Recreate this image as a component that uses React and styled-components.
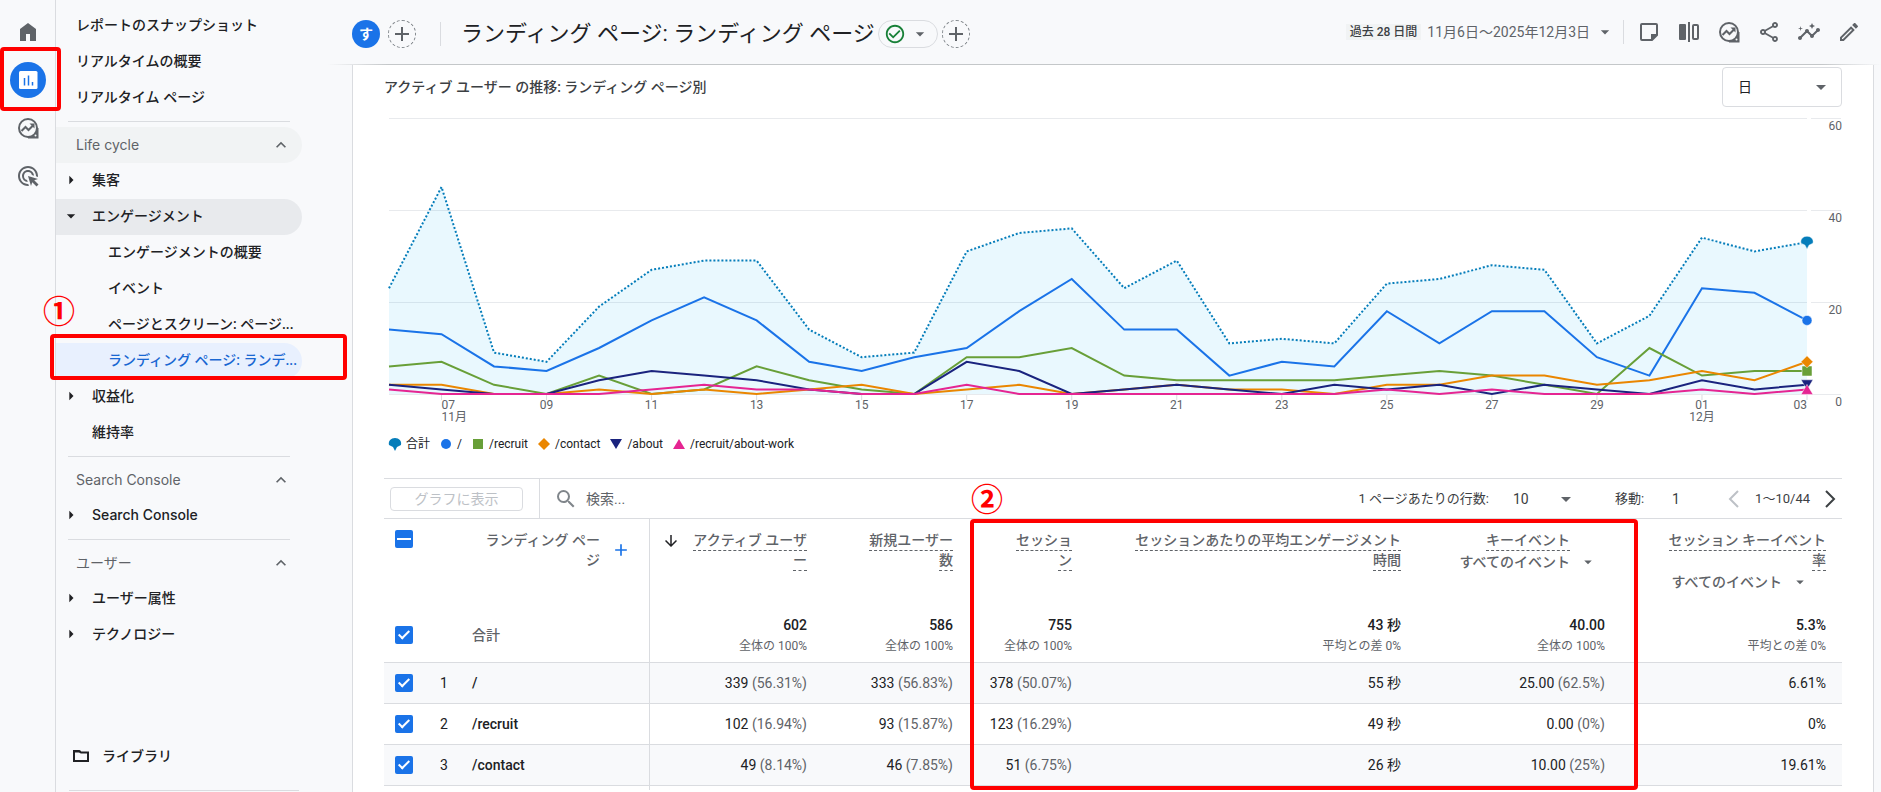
import styled, { createGlobalStyle, css } from "styled-components";

// Import Icons
import {
  MdAdd,
  MdAdsClick,
  MdArrowDownward,
  MdArrowDropDown,
  MdArrowRight,
  MdCheckCircleOutline,
  MdExpandLess,
  MdInsights,
  MdOutlineEdit,
  MdOutlineShare,
  MdSearch,
} from "react-icons/md";

const DAYS = 28;

const series = [
  {
    name: "合計",
    color: "#057dba",
    shape: "fan",
    values: [23, 45, 9, 7, 19, 27, 29, 29, 14, 8, 9, 31, 35, 36, 23, 29, 11, 12, 11, 24, 25, 28, 27, 11, 17, 34, 31, 33],
  },
  {
    name: "/",
    color: "#1a73e8",
    shape: "circle",
    values: [14, 13, 6, 5, 10, 16, 21, 16, 7, 5, 8, 10, 18, 25, 14, 14, 4, 7, 6, 18, 11, 18, 18, 8, 4, 23, 22, 16],
  },
  {
    name: "/recruit",
    color: "#689f38",
    shape: "square",
    values: [6, 7, 2, 0, 4, 0, 1, 6, 3, 1, 0, 8, 8, 10, 4, 3, 3, 3, 3, 4, 5, 4, 2, 0, 10, 4, 5, 5],
  },
  {
    name: "/contact",
    color: "#ea8600",
    shape: "diamond",
    values: [2, 2, 0, 0, 1, 0, 1, 0, 1, 2, 0, 1, 2, 0, 1, 2, 1, 1, 0, 2, 2, 4, 4, 2, 3, 5, 3, 7],
  },
  {
    name: "/about",
    color: "#1a237e",
    shape: "down",
    values: [2, 1, 0, 0, 3, 5, 4, 3, 1, 0, 0, 7, 5, 0, 1, 2, 1, 0, 2, 1, 2, 0, 2, 1, 0, 3, 1, 2],
  },
  {
    name: "/recruit/about-work",
    color: "#e52592",
    shape: "up",
    values: [1, 0, 0, 0, 0, 1, 2, 1, 1, 0, 0, 2, 0, 0, 0, 0, 0, 0, 0, 1, 0, 1, 0, 0, 0, 1, 0, 1],
  },
];

const shapes = {
  fan: "M-6 1C-7 -3 -4 -6 0 -6S7 -3 6 1L2 3 0 7 -2 3Z",
  circle: "M-5 0a5 5 0 1 0 10 0a5 5 0 1 0 -10 0Z",
  square: "M-5 -5H5V5H-5Z",
  diamond: "M0 -6L6 0 0 6 -6 0Z",
  down: "M-6 -5H6L0 5Z",
  up: "M-6 5H6L0 -5Z",
};

const columns = [
  { lines: ["アクティブ ユーザ", "ー"], sorted: true, total: "602", note: "全体の 100%" },
  { lines: ["新規ユーザー", "数"], total: "586", note: "全体の 100%" },
  { lines: ["セッショ", "ン"], total: "755", note: "全体の 100%" },
  { lines: ["セッションあたりの平均エンゲージメント", "時間"], total: "43 秒", note: "平均との差 0%" },
  { lines: ["キーイベント"], filter: true, indent: true, total: "40.00", note: "全体の 100%" },
  { lines: ["セッション キーイベント", "率"], filter: true, total: "5.3%", note: "平均との差 0%" },
];

const rows = [
  {
    path: "/",
    cells: [["339", "(56.31%)"], ["333", "(56.83%)"], ["378", "(50.07%)"], ["55 秒"], ["25.00", "(62.5%)"], ["6.61%"]],
  },
  {
    path: "/recruit",
    cells: [["102", "(16.94%)"], ["93", "(15.87%)"], ["123", "(16.29%)"], ["49 秒"], ["0.00", "(0%)"], ["0%"]],
  },
  {
    path: "/contact",
    cells: [["49", "(8.14%)"], ["46", "(7.85%)"], ["51", "(6.75%)"], ["26 秒"], ["10.00", "(25%)"], ["19.61%"]],
  },
];

const ExploreIcon = () => (
  <svg width="24" height="24" viewBox="0 0 24 24" fill="none" stroke="currentColor" strokeWidth="2">
    <circle cx="12" cy="12" r="9" />
    <path d="M21 12v9h-9c4 0 9-4 9-9z" fill="currentColor" stroke="none" />
    <path d="M21.500 12v9.500H12" />
    <path d="M5.500 15l4-4 3 3 4.500-4.500" />
    <path d="M13.500 7.500h5v5z" fill="currentColor" stroke="none" />
    <circle cx="19.500" cy="19.500" r="1" fill="#f8f9fb" stroke="none" />
  </svg>
);

const HomeIcon = () => (
  <svg width="24" height="24" viewBox="0 0 24 24" fill="currentColor">
    <path d="M4 21V9l8-6 8 6v12h-6v-7h-4v7z" />
  </svg>
);

const ReportsIcon = () => (
  <svg width="24" height="24" viewBox="0 0 24 24">
    <rect x="3" y="3" width="18.500" height="18" rx="1.500" fill="#fff" />
    <path d="M8.500 10v7.500M12.500 7.500v10M16.500 14v3.500" stroke="#1a73e8" strokeWidth="1.500" />
  </svg>
);

const NoteIcon = () => (
  <svg width="24" height="24" viewBox="0 0 24 24" fill="none" stroke="currentColor" strokeWidth="2">
    <path d="M5 4h14a1 1 0 0 1 1 1v10l-5 5H5a1 1 0 0 1-1-1V5a1 1 0 0 1 1-1z" />
    <path d="M14 21v-7h7z" fill="currentColor" stroke="none" />
  </svg>
);

const CompareIcon = () => (
  <svg width="24" height="24" viewBox="0 0 24 24" fill="none" stroke="currentColor" strokeWidth="2">
    <rect x="2" y="4" width="7" height="16" rx="1" fill="currentColor" stroke="none" />
    <path d="M12 2v20" />
    <rect x="16" y="5" width="5" height="14" rx="1" />
  </svg>
);

const FolderIcon = () => (
  <svg width="20" height="20" viewBox="0 0 20 20" fill="none" stroke="currentColor" strokeWidth="2">
    <path d="M3 5h5l2 1.500h7V15H3z" />
    <path d="M2.500 5.500h7" />
  </svg>
);

const PageArrow = ({ d }) => (
  <svg width="24" height="24" viewBox="0 0 24 24" fill="none" stroke="currentColor" strokeWidth="2">
    <path d={d} />
  </svg>
);

const Marker = ({ shape, color, ...rest }) => <path d={shapes[shape]} fill={color} {...rest} />;

// Plot geometry, in the units of the viewBox
const PLOT = { left: 5, right: 1423, base: 287, perUnit: 4.6 };
const xAt = (day) => PLOT.left + ((PLOT.right - PLOT.left) * day) / (DAYS - 1);
const yAt = (value) => PLOT.base - value * PLOT.perUnit;
const toPoints = (values) => values.map((v, i) => `${xAt(i)},${yAt(v)}`).join(" ");

const dayLabels = ["07", "09", "11", "13", "15", "17", "19", "21", "23", "25", "27", "29", "01", "03"];

const TrendChart = () => {
  const total = series[0];
  const area = `${PLOT.left},${PLOT.base} ${toPoints(total.values)} ${PLOT.right},${PLOT.base}`;
  return (
    <ChartSvg viewBox="0 0 1458 322" role="img" aria-label="アクティブ ユーザー の推移">
      {[0, 20, 40, 60].map((v) => (
        <g key={v}>
          <path d={`M${PLOT.left} ${yAt(v) + 0.5}H${PLOT.right}M1427 ${yAt(v) + 0.5}H1457`} stroke="#e8eaed" />
          <text x="1458" y={yAt(v) + 12} textAnchor="end">
            {v}
          </text>
        </g>
      ))}
      <polygon points={area} fill="#03a9f4" fillOpacity="0.085" />
      {dayLabels.map((label, i) => {
        const x = xAt(1 + i * 2);
        const anchor = i === 0 ? "start" : i === 13 ? "end" : "middle";
        return (
          <g key={label}>
            <path d={`M${x} 288v5`} stroke="#dadce0" />
            <text x={x} y="302" textAnchor={anchor}>
              {label}
            </text>
            {(label === "07" || label === "01") && (
              <text x={x} y="314" textAnchor={anchor}>
                {label === "07" ? "11月" : "12月"}
              </text>
            )}
          </g>
        );
      })}
      {series.map((s) => (
        <polyline
          key={s.name}
          points={toPoints(s.values)}
          fill="none"
          stroke={s.color}
          strokeWidth="2"
          strokeDasharray={s === total ? "2 2" : undefined}
        />
      ))}
      {series.map((s) => (
        <Marker
          key={s.name}
          shape={s.shape}
          color={s.color}
          stroke="#fff"
          strokeWidth="0.5"
          transform={`translate(${PLOT.right} ${yAt(s.values[DAYS - 1])})`}
        />
      ))}
    </ChartSvg>
  );
};

const Sidebar = () => (
  <Nav aria-label="レポート">
    <NavItem href="#snapshot">レポートのスナップショット</NavItem>
    <NavItem href="#realtime">リアルタイムの概要</NavItem>
    <NavItem href="#realtime-pages">リアルタイム ページ</NavItem>
    <NavLine />
    <NavHeading $hover>
      Life cycle <MdExpandLess size={20} />
    </NavHeading>
    <NavItem href="#acquisition" $level={1}>
      <MdArrowRight size={20} />
      集客
    </NavItem>
    <NavItem href="#engagement" $level={1} $open>
      <MdArrowDropDown size={20} />
      エンゲージメント
    </NavItem>
    <NavItem href="#overview" $level={2}>エンゲージメントの概要</NavItem>
    <NavItem href="#events" $level={2}>イベント</NavItem>
    <NavItem href="#pages" $level={2}>ページとスクリーン: ページ...</NavItem>
    <Anchor>
      <NavItem href="#landing" $level={2} $active>ランディング ページ: ランデ...</NavItem>
      <NavMark />
      <NavNumber>①</NavNumber>
    </Anchor>
    <NavItem href="#monetization" $level={1}>
      <MdArrowRight size={20} />
      収益化
    </NavItem>
    <NavItem href="#retention" $level={1}>維持率</NavItem>
    <NavLine />
    <NavHeading>
      Search Console <MdExpandLess size={20} />
    </NavHeading>
    <NavItem href="#search-console" $level={1}>
      <MdArrowRight size={20} />
      Search Console
    </NavItem>
    <NavLine />
    <NavHeading>
      ユーザー <MdExpandLess size={20} />
    </NavHeading>
    <NavItem href="#attributes" $level={1}>
      <MdArrowRight size={20} />
      ユーザー属性
    </NavItem>
    <NavItem href="#tech" $level={1}>
      <MdArrowRight size={20} />
      テクノロジー
    </NavItem>
    <Library href="#library">
      <FolderIcon />
      ライブラリ
    </Library>
    <LibraryLine />
  </Nav>
);

const Header = () => (
  <TopBar>
    <TitleGroup>
      <Avatar>す</Avatar>
      <RoundButton aria-label="比較を追加">
        <MdAdd size={24} />
      </RoundButton>
      <TitleDivider />
      <h1>ランディング ページ: ランディング ページ</h1>
      <StatusPill aria-label="ステータス">
        <MdCheckCircleOutline size={22} color="#188038" />
        <MdArrowDropDown size={20} />
      </StatusPill>
      <RoundButton aria-label="フィルタを追加">
        <MdAdd size={24} />
      </RoundButton>
    </TitleGroup>
    <Tools>
      <DateButton>
        <span>過去 28 日間</span>
        11月6日～2025年12月3日
        <MdArrowDropDown size={20} />
      </DateButton>
      <Divider />
      <ToolButton aria-label="メモ"><NoteIcon /></ToolButton>
      <ToolButton aria-label="比較"><CompareIcon /></ToolButton>
      <ToolButton aria-label="探索"><ExploreIcon /></ToolButton>
      <ToolButton aria-label="共有"><MdOutlineShare size={24} /></ToolButton>
      <ToolButton aria-label="インサイト"><MdInsights size={24} /></ToolButton>
      <ToolButton aria-label="編集"><MdOutlineEdit size={24} /></ToolButton>
    </Tools>
  </TopBar>
);

const TableToolbar = () => (
  <Toolbar>
    <PlotButton disabled>グラフに表示</PlotButton>
    <SearchBox>
      <MdSearch size={24} />
      <input type="text" placeholder="検索..." aria-label="検索" />
    </SearchBox>
    <Pager>
      <label htmlFor="page-size">1 ページあたりの行数:</label>
      <SizeSelect>
        <select id="page-size" defaultValue="10">
          <option>10</option>
          <option>25</option>
        </select>
        <MdArrowDropDown size={24} />
      </SizeSelect>
      <label htmlFor="go-to">移動:</label>
      <input id="go-to" type="text" defaultValue="1" />
      <button aria-label="前へ" disabled><PageArrow d="M16 4l-8 8 8 8" /></button>
      <span>1～10/44</span>
      <button aria-label="次へ"><PageArrow d="M8 4l8 8-8 8" /></button>
    </Pager>
  </Toolbar>
);

const DataTable = () => (
  <TableWrap>
    <Table>
      <colgroup>
        <col width="46" />
        <col width="30" />
        <col />
        <col width="173" />
        <col width="146" />
        <col width="119" />
        <col width="329" />
        <col width="204" />
        <col width="221" />
      </colgroup>
      <thead>
        <tr>
          <CheckHead>
            <CheckBox type="checkbox" aria-label="すべて選択" $mixed defaultChecked />
          </CheckHead>
          <DimensionHead colSpan="2">
            <div>
              <span>
                ランディング ペー
                <br />ジ
              </span>
              <button aria-label="ディメンションを追加">
                <MdAdd size={20} />
              </button>
            </div>
          </DimensionHead>
          {columns.map((col) => (
            <MetricHead key={col.lines[0]} $indent={col.indent}>
              <div>
                {col.sorted && <MdArrowDownward size={18} />}
                <p>
                  <span>
                    {col.lines[0]}
                    {col.lines[1] && <br />}
                    {col.lines[1]}
                  </span>
                </p>
              </div>
              {col.filter && (
                <EventFilter $indent={col.indent}>
                  すべてのイベント
                  <MdArrowDropDown size={18} />
                </EventFilter>
              )}
            </MetricHead>
          ))}
        </tr>
      </thead>
      <tbody>
        <TotalRow>
          <td>
            <CheckBox type="checkbox" aria-label="合計" defaultChecked />
          </td>
          <td />
          <NameCell>合計</NameCell>
          {columns.map((col) => (
            <MetricCell key={col.lines[0]}>
              <strong>{col.total}</strong>
              <small>{col.note}</small>
            </MetricCell>
          ))}
        </TotalRow>
        {rows.map((row, i) => (
          <DataRow key={row.path}>
            <td>
              <CheckBox type="checkbox" aria-label={row.path} defaultChecked />
            </td>
            <IndexCell>{i + 1}</IndexCell>
            <NameCell $strong>{row.path}</NameCell>
            {row.cells.map(([value, share], c) => (
              <MetricCell key={c}>
                {value} {share && <span>{share}</span>}
              </MetricCell>
            ))}
          </DataRow>
        ))}
        <tr>
          <TailCell colSpan="3" />
          <td colSpan="6" />
        </tr>
      </tbody>
    </Table>
    <TableMark />
    <TableNumber>②</TableNumber>
  </TableWrap>
);

const App = () => {
  return (
    <>
      <GlobalStyle />
      <Layout>
        <Rail>
          <RailButton aria-label="ホーム"><HomeIcon /></RailButton>
          <Anchor>
            <RailButton aria-label="レポート">
              <i><ReportsIcon /></i>
            </RailButton>
            <RailMark />
          </Anchor>
          <RailButton aria-label="探索"><ExploreIcon /></RailButton>
          <RailButton aria-label="広告"><MdAdsClick size={24} /></RailButton>
        </Rail>
        <Sidebar />
        <Main>
          <Header />
          <Panel>
            <ChartHead>
              <h2>アクティブ ユーザー の推移: ランディング ページ別</h2>
              <UnitSelect>
                <select aria-label="単位" defaultValue="日">
                  <option>日</option>
                  <option>週</option>
                  <option>月</option>
                </select>
                <MdArrowDropDown size={24} />
              </UnitSelect>
            </ChartHead>
            <TrendChart />
            <Legend>
              {series.map((s) => (
                <li key={s.name}>
                  <svg width="14" height="14" viewBox="-7 -7 14 14">
                    <Marker shape={s.shape} color={s.color} />
                  </svg>
                  {s.name}
                </li>
              ))}
            </Legend>
            <TableToolbar />
            <DataTable />
          </Panel>
        </Main>
      </Layout>
    </>
  );
};
export default App;

const GlobalStyle = createGlobalStyle`
  *, *::before, *::after {
    box-sizing: border-box;
  }

  body {
    margin: 0;
    background: #f8f9fb;
    color: #202124;
    font: 400 14px/20px Roboto, "Noto Sans CJK JP", sans-serif;
  }

  h1, h2, p, ul {
    margin: 0;
    padding: 0;
    font-weight: 400;
  }

  button, input, select {
    font: inherit;
    color: inherit;
    background: none;
    border: 0;
    padding: 0;
    margin: 0;
  }

  select {
    appearance: none;
  }

  svg {
    display: block;
    flex: none;
  }
`;

const Layout = styled.div`
  display: grid;
  grid-template-columns: 56px 296px minmax(0, 1fr);
  min-height: 100vh;
`;

/* Red call-outs drawn over the page */
const mark = css`
  position: absolute;
  border: 4px solid #f00;
  border-radius: 4px;
  pointer-events: none;
  z-index: 2;
`;

const number = css`
  position: absolute;
  color: #f00;
  font: 700 32px/32px "Noto Sans CJK JP", sans-serif;
  z-index: 2;
`;

const Anchor = styled.div`
  position: relative;
`;

const Rail = styled.aside`
  padding-top: 8px;
  border-right: 1px solid #dadce0;
`;

const RailButton = styled.button`
  display: flex;
  align-items: center;
  justify-content: center;
  width: 56px;
  height: 48px;
  color: #5f6368;

  i {
    display: flex;
    align-items: center;
    justify-content: center;
    width: 36px;
    height: 36px;
    border-radius: 50%;
    background: #1a73e8;
  }
`;

const RailMark = styled.span`
  ${mark}
  top: -9px;
  left: 0;
  width: 61px;
  height: 64px;
`;

const Nav = styled.nav`
  display: flex;
  flex-direction: column;
  padding-top: 8px;
  font-family: Inter, "Noto Sans CJK JP", sans-serif;
`;

const indents = [20, 36, 52];

const NavItem = styled.a`
  display: flex;
  align-items: center;
  width: 246px;
  height: 36px;
  padding-left: ${({ $level = 0 }) => indents[$level]}px;
  padding-bottom: 2px;
  border-radius: 0 18px 18px 0;
  color: ${({ $active }) => ($active ? "#1967d2" : "#202124")};
  background: ${({ $active, $open }) => ($active ? "#e8f0fe" : $open ? "#e8eaed" : "none")};
  font-family: ${({ $level }) => ($level === 2 ? 'Roboto, "Noto Sans CJK JP", sans-serif' : "inherit")};
  font-weight: 500;
  text-decoration: none;
  white-space: nowrap;

  svg {
    margin: 0 11px 0 -31px;
  }
`;

const NavHeading = styled.button`
  display: flex;
  align-items: center;
  justify-content: space-between;
  width: 246px;
  height: 36px;
  padding: 0 11px 0 20px;
  border-radius: 0 18px 18px 0;
  background: ${({ $hover }) => ($hover ? "#f1f3f4" : "none")};
  color: #5f6368;
`;

const NavLine = styled.hr`
  width: 222px;
  margin: 5px 0 5px 12px;
  border: 0;
  border-top: 1px solid #dadce0;
`;

const Library = styled(NavItem)`
  margin-top: auto;
  padding-left: 15px;

  svg {
    margin: 0 11px 0 0;
  }
`;

const LibraryLine = styled(NavLine)`
  width: 230px;
  margin: 15px 0 1px 13px;
`;

const NavMark = styled.span`
  ${mark}
  top: -9px;
  left: -6px;
  width: 297px;
  height: 46px;
`;

const NavNumber = styled.span`
  ${number}
  top: -50px;
  left: -13px;
`;

const Main = styled.main`
  display: flex;
  flex-direction: column;
`;

const TopBar = styled.header`
  position: relative;
  display: flex;
  justify-content: space-between;
  height: 65px;
  padding-right: 12px;

  &::after {
    content: "";
    position: absolute;
    right: 0;
    bottom: 0;
    left: -24px;
    height: 1px;
    background: linear-gradient(to right, transparent, #c4c7c9 60px, #c4c7c9 calc(100% - 60px), transparent);
  }
`;

const TitleGroup = styled.div`
  display: flex;
  align-items: center;
  height: 64px;
  padding-top: 4px;

  h1 {
    margin-right: 3px;
    font-size: 22px;
    line-height: 28px;
    white-space: nowrap;
  }
`;

const Avatar = styled.span`
  width: 28px;
  margin-right: 8px;
  border-radius: 50%;
  background: #1a73e8;
  color: #fff;
  font-weight: 700;
  line-height: 28px;
  text-align: center;
`;

const RoundButton = styled.button`
  display: flex;
  align-items: center;
  justify-content: center;
  width: 28px;
  height: 28px;
  border: 1px dashed #80868b;
  border-radius: 50%;
  color: #5f6368;
`;

const Divider = styled.span`
  width: 1px;
  height: 24px;
  margin: 0 5px 0 8px;
  background: #dadce0;
`;

const TitleDivider = styled(Divider)`
  margin: 0 20px 0 24px;
`;

const StatusPill = styled.button`
  display: flex;
  align-items: center;
  justify-content: space-between;
  width: 60px;
  height: 28px;
  margin-right: 4px;
  padding: 0 7px 0 5px;
  border: 1px solid #dadce0;
  border-radius: 14px;
  color: #5f6368;
`;

const Tools = styled.div`
  display: flex;
  align-items: center;
  height: 64px;
`;

const DateButton = styled.button`
  display: flex;
  align-items: center;
  color: #5f6368;
  white-space: nowrap;

  span {
    margin-right: 6px;
    padding: 0 4px;
    background: #f1f3f4;
    color: #3c4043;
    font-size: 12px;
    font-weight: 500;
    line-height: 16px;
  }

  svg {
    margin-left: 5px;
  }
`;

const ToolButton = styled.button`
  display: flex;
  align-items: center;
  justify-content: center;
  width: 40px;
  height: 40px;
  color: #5f6368;
`;

const Panel = styled.section`
  flex: 1;
  margin-right: 7px;
  padding: 2px 31px 0;
  border: solid #dadce0;
  border-width: 0 1px;
  background: #fff;
`;

const ChartHead = styled.div`
  display: flex;
  align-items: center;
  justify-content: space-between;
  height: 40px;

  h2 {
    font-size: 14px;
    line-height: 20px;
    font-weight: 500;
    color: #3c4043;
  }
`;

const selectBox = css`
  position: relative;

  select {
    width: 100%;
    height: 100%;
  }

  svg {
    position: absolute;
    top: 50%;
    margin-top: -12px;
    color: #5f6368;
    pointer-events: none;
  }
`;

const UnitSelect = styled.div`
  ${selectBox}
  width: 120px;
  height: 40px;
  border: 1px solid #dadce0;
  border-radius: 4px;

  select {
    padding-left: 15px;
  }

  svg {
    right: 8px;
  }
`;

const ChartSvg = styled.svg`
  width: 100%;
  height: auto;

  text {
    fill: #5f6368;
    font-size: 12px;
  }
`;

const Legend = styled.ul`
  display: flex;
  gap: 9px;
  padding: 7px 0 0 4px;
  list-style: none;
  font-size: 12px;
  line-height: 16px;

  li {
    display: flex;
    align-items: center;
    gap: 4px;
  }
`;

const Toolbar = styled.div`
  display: flex;
  align-items: stretch;
  height: 41px;
  margin-top: 26px;
  border: solid #dadce0;
  border-width: 1px 0;
`;

const PlotButton = styled.button`
  width: 133px;
  height: 24px;
  margin: 8px 16px 0 6px;
  border: 1px solid #dadce0;
  border-radius: 4px;
  color: #bdc1c6;
  line-height: 20px;
`;

const SearchBox = styled.div`
  display: flex;
  flex: 1;
  align-items: center;
  padding-left: 14px;
  border-left: 1px solid #dadce0;
  color: #80868b;

  input {
    flex: 1;
    margin-left: 8px;
    outline: 0;
  }

  input::placeholder {
    color: #5f6368;
  }
`;

const Pager = styled.div`
  display: flex;
  align-items: center;
  color: #3c4043;
  font-size: 13px;

  input {
    width: 42px;
    margin-left: 28px;
    font-size: 14px;
  }

  button {
    width: 24px;
    margin-left: 8px;
  }

  button:disabled {
    margin-right: 9px;
    color: #bdc1c6;
  }
`;

const SizeSelect = styled.div`
  ${selectBox}
  width: 65px;
  height: 24px;
  margin: 0 37px 0 24px;
  font-size: 14px;

  svg {
    right: 0;
  }
`;

const TableWrap = styled.div`
  position: relative;
`;

const Table = styled.table`
  width: 100%;
  table-layout: fixed;
  border-collapse: separate;
  border-spacing: 0;

  th {
    height: 89px;
    vertical-align: top;
    font-weight: 500;
  }

  td {
    padding: 0;
    border-bottom: 1px solid #dadce0;
  }

  td:first-child {
    padding-left: 11px;
  }

  tr:last-child td {
    height: 4px;
    border-bottom: 0;
  }
`;

const CheckHead = styled.th`
  padding: 11px 0 0 11px;
  text-align: left;
`;

const CheckBox = styled.input`
  appearance: none;
  display: block;
  position: relative;
  width: 18px;
  height: 18px;
  border-radius: 2px;
  background: #1a73e8;

  &::after {
    content: "";
    position: absolute;
    ${({ $mixed }) =>
      $mixed
        ? css`
            top: 8px;
            left: 2px;
            width: 14px;
            height: 2px;
            background: #fff;
          `
        : css`
            top: 2px;
            left: 6px;
            width: 6px;
            height: 11px;
            border: solid #fff;
            border-width: 0 2px 2px 0;
            transform: rotate(45deg);
          `}
  }
`;

const DimensionHead = styled.th`
  padding: 11px 18px 0 0;
  border-right: 1px solid #dadce0;
  color: #5f6368;
  text-align: right;

  div {
    display: flex;
    align-items: center;
    justify-content: flex-end;
    gap: 11px;
  }

  button {
    color: #1a73e8;
  }
`;

const MetricHead = styled.th`
  padding: 11px 16px 0 0;
  color: #5f6368;
  text-align: right;
  white-space: nowrap;

  div {
    display: flex;
    justify-content: flex-end;
    gap: 13px;
    padding-right: ${({ $indent }) => ($indent ? 35 : 0)}px;
  }

  div svg {
    margin-top: 2px;
    color: #202124;
  }

  p {
    font-weight: 500;
  }

  p span {
    padding-bottom: 2px;
    border-bottom: 1px dashed #5f6368;
  }
`;

const EventFilter = styled.button`
  display: flex;
  align-items: center;
  gap: 9px;
  margin: 2px ${({ $indent }) => ($indent ? 8 : 17)}px 0 auto;
`;

const NameCell = styled.td`
  && {
    padding-left: 12px;
    border-right: 1px solid #dadce0;
  }
  color: ${({ $strong }) => ($strong ? "#202124" : "#5f6368")};
  font-weight: 500;
`;

const TailCell = styled.td`
  border-right: 1px solid #dadce0;
`;

const IndexCell = styled.td`
  && {
    padding-left: 10px;
  }
`;

const MetricCell = styled.td`
  && {
    padding-right: 16px;
  }
  text-align: right;
  white-space: nowrap;

  strong,
  small {
    display: block;
    font-size: 14px;
    line-height: 22px;
    font-weight: 500;
  }

  small {
    font-size: 12px;
    line-height: 20px;
    font-weight: 400;
  }

  span,
  small {
    color: #5f6368;
  }
`;

const TotalRow = styled.tr`
  height: 55px;
`;

const DataRow = styled.tr`
  height: 41px;

  &:nth-child(even) {
    background: #f8f9fb;
  }
`;

const TableMark = styled.span`
  ${mark}
  top: 0;
  right: 204px;
  bottom: 0;
  width: 668px;
`;

const TableNumber = styled.span`
  ${number}
  top: -38px;
  right: 839px;
`;
